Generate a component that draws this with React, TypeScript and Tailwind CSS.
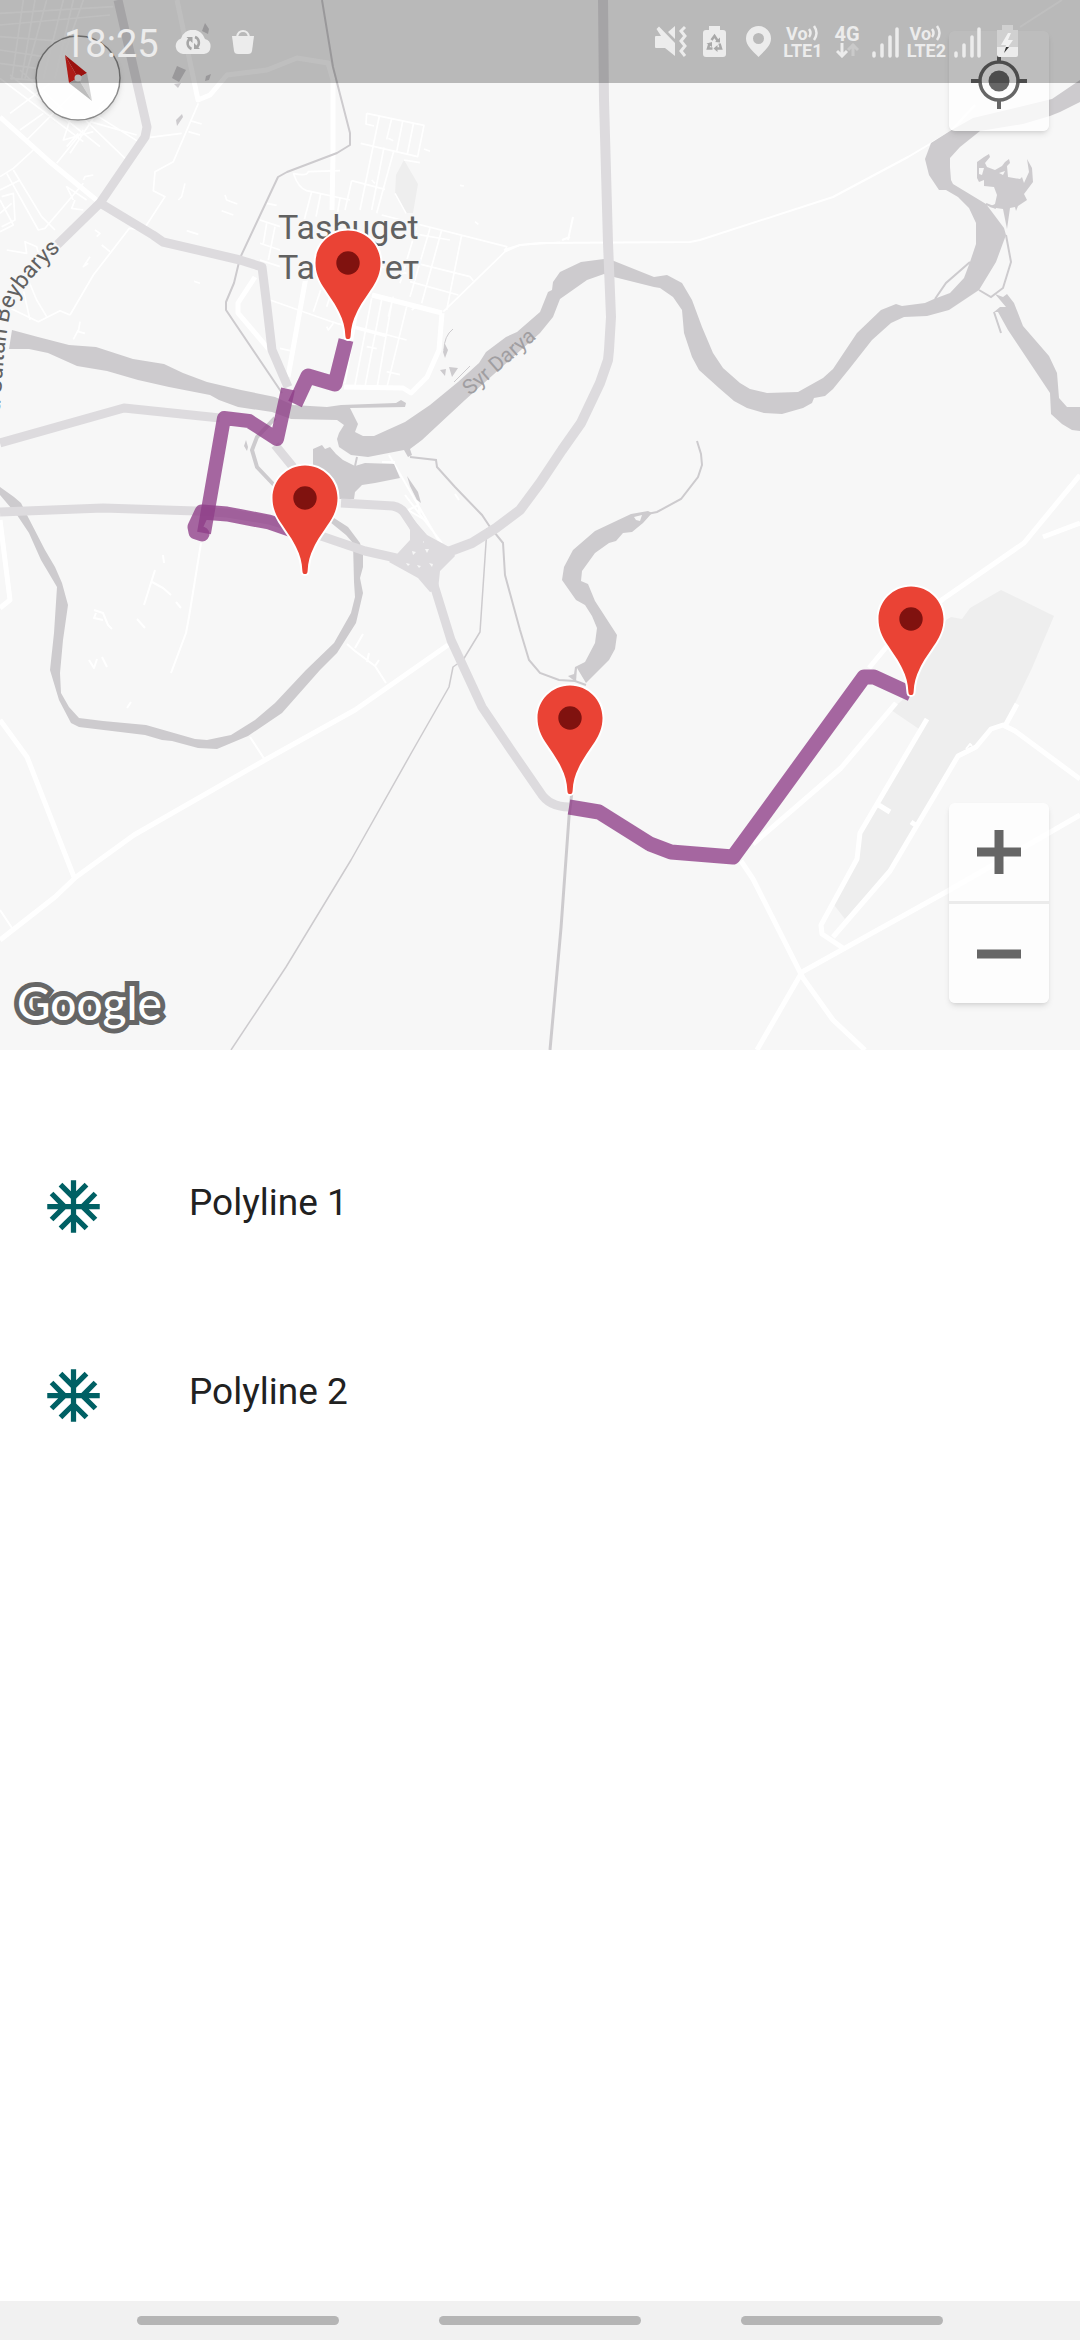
import { MdAcUnit } from "react-icons/md";

const ROUTE_COLOR = "#8e3d88";

const pins = [
  { x: 348, y: 263 },
  { x: 305, y: 498 },
  { x: 570, y: 718 },
  { x: 911, y: 619 },
];

const polylines = [
  { id: 1, name: "Polyline 1" },
  { id: 2, name: "Polyline 2" },
];

function Pin({ x, y }: { x: number; y: number }) {
  return (
    <g transform={`translate(${x} ${y})`}>
      <path
        d="M0-32.500C-18-32.500-32.500-18-32.500 0C-32.500 10-29 17-25 23.500C-18 34-12 42-8.500 50C-5 57-3 64-2.600 73C-2.500 75.500-1.500 76 0 76C1.500 76 2.500 75.500 2.600 73C3 64 5 57 8.500 50C12 42 18 34 25 23.500C29 17 32.500 10 32.500 0C32.500-18 18-32.500 0-32.500Z"
        fill="#ea4335"
        stroke="#fff"
        strokeWidth="4"
        paintOrder="stroke"
      />
      <circle r="11.700" fill="#80120f" />
    </g>
  );
}

function Water() {
  return (
    <g fill="#cdcbce">
      <path d="M12 330L38 337L69 345L96 347L133 359L164 364L183 373L207 382L241 390L275 397L293 405L327 407L341 405L396 403L401 400L406 403L405 407L350 408L358 424L355 432L363 436L374 436L405 422L430 405L458 382L479 363L486 352L506 337L517 332L540 312L548 292L552 290L553 282L560 272L581 262L604 259L614 261L654 277L667 275L682 283L692 300L702 327L713 353L723 368L740 383L750 389L767 393L798 392L823 378L833 369L857 333L881 310L896 304L902 306L925 303L934 299L950 293L964 278L970 262L976 244L976 223L969 208L958 197L946 190L939 190L929 175L925 159L931 143L950 131L973 118L1052 99L1080 80L1080 102L1060 112L1050 116L1023 124L980 131L960 147L950 158L950 167L951 180L953 184L986 204L1004 228L1006 235L1003 243L996 262L979 290L949 310L927 316L904 317L891 323L872 340L850 368L833 389L825 396L814 398L812 403L803 408L782 414L764 413L747 408L734 401L719 388L699 370L692 357L684 333L682 310L673 297L660 288L654 287L614 277L604 274L587 280L560 299L553 317L540 333L465 400L422 440L410 449L412 455L408 457L404 450L368 457L351 455L339 447L337 439L339 433L344 425L337 420L291 419L272 412L238 407L219 400L210 395L169 387L138 380L107 371L77 366L48 353L29 349L9 349Z" />
      <path d="M313 449L322 445L325 449L330 447L336 454L343 460L355 466L365 463L394 464L400 478L375 483L362 485L355 492L354 499L331 499L313 483Z" />
      <path d="M0 487L14 497L21 503L28 517L45 550L55 567L62 583L68 605L63 640L60 673L61 693L69 707L79 718L103 721L146 725L195 739L207 740L231 735L255 720L275 703L306 670L334 643L351 613L355 597L354 582L353 543L346 535L330 522L334 518L348 527L360 543L363 555L363 567L360 578L363 593L356 623L337 653L320 670L282 713L248 736L217 749L198 748L172 741L162 740L145 735L79 727L71 723L59 700L50 670L54 633L57 587L41 560L29 533L17 515L0 495Z" />
      <path
        fillRule="evenodd"
        d="M652 513L648 511L631 514L595 531L573 550L564 567L562 580L576 600L585 605L592 616L597 628L595 643L585 662L575 667L574 674L568 676L576 682L577 668L586 683L609 660L615 649L617 635L595 601L588 584L581 581L582 571L595 553L609 543L616 541L623 533L632 532L643 523ZM634 517L642 515L640 521L636 520Z"
      />
      <path
        fillRule="evenodd"
        d="M977 162L984 157L989 154L990 157L985 163L987 167L995 170L1002 166L1005 162L1009 159L1010 163L1007 166L1008 177L1020 179L1022 177L1024 183L1029 172L1027 159L1032 168L1033 182L1024 194L1027 200L1018 206L1016 211L1015 207L1010 208L1007 229L1003 209L989 207L995 204L997 195L994 187L984 186L984 180L979 182L977 178ZM979 168L984 168L982 175L979 174ZM999 173L1005 171L1003 175Z"
      />
      <path d="M995 294L1003 297L1007 294L1014 303L1023 326L1049 356L1057 373L1059 398L1067 407L1080 407L1080 431L1072 430L1062 424L1051 414L1050 393L1026 357L1008 330L998 312L994 312L1000 307L1006 307Z" />
      <path d="M407 476L418 492L421 503L417 500L410 486ZM445 344L448 350L445 358L443 352ZM440 370L446 369L445 376ZM449 367L458 368L452 377ZM246 440L248 447L247 451L244 446Z" />
      <path d="M205 23L209 29L208 34L202 31ZM177 66L186 70L179 82L172 78ZM206 76L211 74L209 80L205 81ZM182 114L183 117L177 126L176 120ZM174 84L181 83L178 88Z" />
      <g fill="none" stroke="#cdcbce" strokeWidth="2">
        <path d="M1006 235L1011 262L1003 288L991 297L979 290M970 262L946 283L935 299M986 204L996 208M994 312L1001 333" />
        <path d="M647 514L657 512L681 499L698 477L702 465L701 454L697 441" />
        <path d="M410 457L436 460L437 467L455 487L482 515L490 527L503 543L505 575L520 630L529 660L540 673L559 680L575 681L586 685" />
        <path d="M357 457L355 466" />
        <path d="M275 418L257 437L252 450L257 467L274 485" strokeWidth="4" />
        <path d="M444 350Q444 336 453 329M454 382L470 366" strokeWidth="1" />
      </g>
    </g>
  );
}

function MinorStreets() {
  return (
    <g fill="none" stroke="#fff" strokeLinejoin="round">
      {/* Tasbuget street grid */}
      <g transform="translate(260 110) scale(.33333)" strokeWidth="5">
        <path d="M320 10L492 46L473 140L302 100M320 10L318 42L342 48M358 18L300 300M395 26L380 88M428 34L410 125M460 42L442 132M402 120L350 310M372 112L335 300M432 150L480 158M275 212L375 238M275 212L255 300" />
        <path d="M100 190Q115 235 140 242L270 270M100 190Q140 200 145 185L240 182M155 245L130 340M182 252L168 320M240 265L232 310M20 280L50 286M0 330L60 350M0 400L60 420M20 340L10 400M45 350L25 450M0 450L60 470" />
        <path d="M365 315L740 410L735 425L550 605M510 355L450 560M545 360L485 580M605 375L560 600M470 350L420 520M455 370L570 390M450 455L630 500L640 512M450 515L595 555M365 470L440 490M735 425L780 405L900 397" />
        <path d="M30 570L215 635M215 635L230 640L380 680M182 540L160 605M215 545L200 590M250 640L440 690M300 560L255 820M335 565L285 825M365 570L315 830M395 580L350 840M440 590L380 835M320 710L350 716M380 785L420 794M400 560L385 620M475 585L455 600M60 715L90 722M200 650L205 660L220 640" />
        <path d="M385 85L400 92M335 210L345 220M492 117L510 124M600 226L612 228M645 335L655 343M405 250L438 310" />
      </g>
      {/* Western suburb street grid */}
      <g transform="scale(.33333)" strokeWidth="5">
        <path d="M70 0L35 240M105 0L65 235M140 0L75 235M190 0L130 235M220 0L165 235M250 0L190 170M0 40L340 20M0 75L330 45M0 110L200 125M0 150L130 170M0 190L110 205M30 235L240 250M0 235L250 425M30 225L300 440M60 210L190 330" />
        <path d="M270 365L410 405M240 345L375 475M280 340L415 425M210 360L190 420L280 395M170 490L250 390M200 440L235 400M310 310L210 460M130 340L60 390M240 260L80 420M150 250L30 340M100 450L40 505L0 530" />
        <path d="M20 520L115 690L135 685L250 550M40 510L125 650M0 570L60 540M0 600L40 675L0 695M0 640L35 610M5 590L40 580L45 660L5 680M125 650L165 690M220 600L200 560L260 600M225 600L215 625L250 630" />
        <path d="M20 750L80 760L75 725L110 740L120 780M85 840L110 900L140 950M70 870L90 960M265 790L250 800L270 770M305 735L330 755M285 690L300 700L290 710M250 540L255 530L280 525M535 600L545 590L555 550" />
        <path d="M450 412L545 400M570 362L605 372M210 945L180 932L115 965L0 910M210 945L280 825L388 685L430 690L495 590L460 572L465 515L520 485L595 310" />
        <path d="M665 632L700 645M675 585L680 600L712 612M560 692L595 703M582 844L600 850M565 395L600 405M240 965L235 995L255 1000M235 990L220 1018" />
      </g>
      {/* Rural tracks */}
      <g strokeWidth="2">
        <path d="M201 543L189 617L186 633L171 673M155 570L144 605M152 582L163 588L171 595M176 602L181 608M137 619L145 628M163 555L164 563M94 610L103 613L108 625L112 629M96 613L94 618L103 620M89 660L94 668L97 659M102 657L107 667M131 702L127 708M250 737L265 760M0 910L12 928M347 644L355 651L375 666L386 683M355 648L363 634M367 662L369 653M375 666L379 660" />
        <path d="M504 250L520 245L540 243L690 242L700 240L833 197L908 157L950 132L975 105M1020 27L1062 0M568 240L573 217M562 240L570 237" />
        <path d="M389 455L440 543M405 495L442 543M382 462L395 462M419 505L408 510L425 520M417 500L420 514M455 494L459 500" />
        <path d="M972 746L970 744L966 749" />
      </g>
    </g>
  );
}

function Roads() {
  return (
    <g fill="none" strokeLinejoin="round">
      <g stroke="#fff" strokeWidth="5">
        <path d="M0 117L50 162L100 203M333 80L333 153L332 210M177 0L198 100L210 95L227 75L267 70L297 58L328 63L333 80" />
        <path d="M442 313L439 350L427 377L411 393L403 388L344 387M442 313L372 295M306 277L300 310L288 377M255 277L238 303L238 313L272 353" />
        <path d="M1080 475L1024 543L943 599L888 645L869 668M1080 523L1043 537M896 703L841 768L753 844M741 861L753 879L803 978L833 1020L865 1050M1080 815L946 892L802 972L757 1050M1080 779L1015 731L1003 725L991 729L976 747L958 756L890 871L833 937M927 719L877 804L860 833L857 859L821 925L822 934L843 948M1017 704L1005 726M877 804L890 812M911 822L917 826" />
        <path d="M0 720L27 757L74 877M0 940L55 897L76 877L134 835L265 760L355 710L448 645M0 608L10 600L0 520" />
      </g>
      <g stroke="#cdcbce" strokeWidth="2">
        <path d="M322 0L333 67L350 133L350 145L337 153L287 172L278 177L240 258L234 283L226 302L226 310L282 393" />
        <path d="M487 528L480 632L463 660L453 667L449 687L413 750L351 860L286 967L231 1050" strokeWidth="1.500" />
        <path d="M573 783L569 817L561 928L550 1050" strokeWidth="3" />
      </g>
      <g stroke="#dddbde" strokeWidth="9">
        <path d="M118 0L147 127L145 137L100 203L57 245M100 203L153 235L163 242L240 260L262 267L267 307L272 350L288 387M0 443L124 408L220 418" />
        <path d="M603 0L604 100L608 243L611 317L609 350L608 360L600 383L581 423L562 450L540 483L520 510L496 528L472 543L448 552L436 560" strokeWidth="10" />
        <path d="M434 585L451 640L482 707L511 750L540 792Q549 807 569 807M0 512L103 508L196 511L227 513L269 520L324 537L365 551L396 558L410 560M275 445L293 467M341 503L393 506Q402 508 405 514L417 532L430 545L448 552" />
      </g>
      <path
        d="M405 512L414 520L427 535L451 548L455 556L440 571L438 590L430 592L418 578L389 562L398 553L410 540L410 530Z"
        fill="#dddbde"
      />
      <path
        d="M412 551L416 552L413 555ZM425 549L429 549L427 553ZM406 563L410 564L408 566ZM417 565L421 566L419 568ZM429 563L433 564L432 567ZM423 541L424 542L423 543Z"
        fill="#f7f7f7"
      />
    </g>
  );
}

function MapCanvas() {
  return (
    <svg
      viewBox="0 0 1080 1050"
      className="block w-full"
      role="img"
      aria-label="Map of Tasbuget"
      fontFamily="Roboto, sans-serif"
    >
      <rect width="1080" height="1050" fill="#f7f7f7" />
      <path
        d="M946 620L951 617L962 619L970 608L1001 590L1054 616L1032 668L1005 724L991 729L976 747L958 756L915 827L888 871L845 919L834 905L857 861L860 833L919 729L891 710L908 695ZM404 160L418 184L413 213L405 213L395 195L396 175Z"
        fill="#eee"
      />
      <MinorStreets />
      <Water />
      <Roads />
      <g fill="none" stroke={ROUTE_COLOR} strokeOpacity=".78" strokeWidth="15" strokeLinejoin="round">
        <path d="M346 340L335 384L308 376L295 404" />
        <path d="M288 389L277 439L249 421L224 418L204 533" strokeWidth="14" />
        <path d="M202 534L196 532L195 527L202 512L227 514L269 522L295 531" strokeLinecap="round" />
        <path d="M569 807L599 812L650 844L671 852L733 857L864 677L874 677L911 694" />
      </g>
      <g fill="#616161" stroke="#f7f7f7" strokeWidth="4" paintOrder="stroke">
        <text x="278" y="239" fontSize="34">Tasbuget</text>
        <text x="278" y="279" fontSize="34">Тасбөгет</text>
        <path id="beybarys" d="M-6 480L2 380Q5 335 11 310Q25 281 61 249" fill="none" stroke="none" />
        <text fontSize="23">
          <textPath href="#beybarys" startOffset="100%" textAnchor="end">ulitsa Sultan Beybarys</textPath>
        </text>
      </g>
      <text fontSize="21" fill="#a09ea1" transform="translate(470 396) rotate(-41)">Syr Darya</text>
      {pins.map((p) => (
        <Pin key={`${p.x}-${p.y}`} x={p.x} y={p.y} />
      ))}
    </svg>
  );
}

function Signal() {
  return (
    <svg width="27" height="33" viewBox="0 0 27 33" stroke="currentColor" strokeWidth="3.500" strokeLinecap="round">
      <path d="M2 28V31M10 20V31M18 12V31M25 4V31" />
    </svg>
  );
}

function VoLte({ slot }: { slot: number }) {
  return (
    <span className="flex flex-col items-center text-[18px] leading-[17px] font-bold">
      <span className="flex items-center">
        Vo
        <svg width="12" height="16" viewBox="0 0 12 16" fill="none" stroke="currentColor" strokeWidth="2.500">
          <path d="M1 4Q4 8 1 12M6 1Q11 8 6 15" />
        </svg>
      </span>
      <span>LTE{slot}</span>
    </span>
  );
}

function StatusBar() {
  return (
    <header className="absolute inset-x-0 top-0 z-10 flex h-[83px] items-center bg-black/25 pr-[62px] pl-16 text-[#ececec]">
      <time className="pt-1 text-[38px] leading-10">18:25</time>
      <svg className="ml-4" width="36" height="24" viewBox="0 0 36 24" fill="currentColor">
        <path d="M8 24A8 8 0 0 1 6 8.500A12.500 12.500 0 0 1 30 9A7.700 7.700 0 0 1 29 24Z" />
        <g fill="none" stroke="#a6a6a6" strokeWidth="2.500">
          <path d="M16.500 19A6 6 0 0 1 14.500 9M20 7A6 6 0 0 1 22 17" />
        </g>
        <path d="M11.500 7H17.500V13ZM25 19H19V13Z" fill="#a6a6a6" />
      </svg>
      <svg className="ml-5" width="24" height="26" viewBox="0 0 24 26" fill="currentColor">
        <path d="M1 7H23L21 22Q20.500 25 17 25H7Q3.500 25 3 22Z" />
        <path d="M6 8Q7 2 12 2Q17 2 18 8" fill="none" stroke="currentColor" strokeWidth="2" />
      </svg>
      <div className="ml-auto flex items-center">
        <svg width="32" height="33" viewBox="0 0 32 33" fill="currentColor">
          <path d="M0 12Q0 11 1 11H6L1.500 4L4 1.500L20 18V31L10 23H1Q0 23 0 22ZM20 1V14L13 7Z" />
          <path
            d="M30 2L26 6L30 11L26 16L30 21L26 26L30 31"
            fill="none"
            stroke="currentColor"
            strokeWidth="3"
          />
        </svg>
        <svg className="ml-4" width="23" height="33" viewBox="0 0 23 33" fill="currentColor">
          <path d="M6 1H17V5H20Q23 5 23 8V29Q23 32 20 32H3Q0 32 0 29V8Q0 5 3 5H6Z" />
          <g fill="none" stroke="#a9a9a9" strokeWidth="2.500">
            <path d="M8.500 15L11.500 11L14.500 15.500M16.500 18.500L18 23.500H13.500M9.500 23.500H5L6.500 18.500" />
          </g>
          <path d="M12 17L17 17.500L17 12.500ZM14.500 20V27L10.500 23.500ZM3.500 18.500L9 17L9 22Z" fill="#a9a9a9" />
        </svg>
        <svg className="ml-5" width="25" height="33" viewBox="0 0 25 33" fill="currentColor">
          <path
            fillRule="evenodd"
            d="M12.500 1A12.500 12.500 0 0 0 0 13.500C0 21 7 26 12.500 32C18 26 25 21 25 13.500A12.500 12.500 0 0 0 12.500 1ZM12.500 8A5.500 5.500 0 1 1 12.500 19A5.500 5.500 0 1 1 12.500 8Z"
          />
        </svg>
        <span className="ml-3">
          <VoLte slot={1} />
        </span>
        <span className="ml-3 flex flex-col items-center text-[20px] leading-[18px] font-bold">
          4G
          <svg width="23" height="15" viewBox="0 0 23 15" fill="none" stroke="currentColor" strokeWidth="3">
            <path d="M6 0V12M1 8L6 13L11 8" />
            <path d="M17 13V1M12 7L17 2L22 7" strokeOpacity=".35" />
          </svg>
        </span>
        <span className="ml-3">
          <Signal />
        </span>
        <span className="ml-2">
          <VoLte slot={2} />
        </span>
        <span className="ml-2">
          <Signal />
        </span>
        <svg className="ml-4" width="21" height="33" viewBox="0 0 21 33">
          <path d="M5 0H16V5H21V22H0V5H5Z" fill="#d0d0d0" />
          <path d="M0 22H21V30Q21 32 19 32H2Q0 32 0 30Z" fill="currentColor" />
          <path d="M11 8L4 20H9L7 28L16 15H11L14 8Z" fill="#f2f2f2" />
          <path d="M9 22L7 28L12 22Z" fill="#333" />
        </svg>
      </div>
    </header>
  );
}

function Compass() {
  return (
    <button aria-label="Reset bearing" className="absolute top-[35px] left-[35px] rounded-full shadow-md">
      <svg width="86" height="86" viewBox="-43 -43 86 86" className="block">
        <circle r="42" fill="#fff" fillOpacity=".85" stroke="#8c8c8c" strokeWidth="1.500" />
        <path d="M-13-23L9-5L0 0Z" fill="#cf1815" />
        <path d="M-13-23L-9 5L0 0Z" fill="#e8241f" />
        <path d="M14 23L9-5L0 0Z" fill="#d6d6d6" />
        <path d="M14 23L-9 5L0 0Z" fill="#bdbdbd" />
        <circle r="3.500" fill="#f5f5f5" />
      </svg>
    </button>
  );
}

export default function App() {
  return (
    <div className="flex min-h-screen flex-col bg-white font-[Roboto,sans-serif] text-[#212121]">
      <section className="relative">
        <MapCanvas />
        <Compass />
        <button
          aria-label="My location"
          className="absolute top-[31px] right-[31px] flex size-[100px] items-center justify-center rounded-md bg-white/80 text-[#666] shadow-md"
        >
          <svg width="58" height="58" viewBox="-29 -29 58 58" fill="none" stroke="currentColor">
            <circle r="19" strokeWidth="3.500" />
            <circle r="10.500" fill="currentColor" stroke="none" />
            <path d="M0-28V-19M0 19V28M-28 0H-19M19 0H28" strokeWidth="4" />
          </svg>
        </button>
        <div className="absolute right-[31px] bottom-[47px] flex w-[100px] flex-col divide-y-[3px] divide-[#ebebeb] rounded-md bg-white/80 text-[#666] shadow-md">
          <button aria-label="Zoom in" className="flex h-[101px] items-center justify-center">
            <svg width="44" height="44" viewBox="0 0 44 44" stroke="currentColor" strokeWidth="9">
              <path d="M22 0V44M0 22H44" />
            </svg>
          </button>
          <button aria-label="Zoom out" className="flex h-[99px] items-center justify-center">
            <svg width="44" height="44" viewBox="0 0 44 44" stroke="currentColor" strokeWidth="9">
              <path d="M0 22H44" />
            </svg>
          </button>
        </div>
        <a href="#google" className="absolute bottom-0 left-3">
          <svg width="180" height="90" viewBox="0 0 180 90">
            <text
              x="5"
              y="60"
              fontFamily="Lato, sans-serif"
              fontWeight="500"
              fontSize="46"
              fill="#fff"
              stroke="#666"
              strokeWidth="10"
              paintOrder="stroke"
            >
              Google
            </text>
          </svg>
        </a>
        <StatusBar />
      </section>

      <main className="grow pt-[62px]">
        <ul>
          {polylines.map((line) => (
            <li key={line.id}>
              <button className="flex h-[189px] w-full items-center gap-[84px] px-[42px] text-left">
                <MdAcUnit size={63} color="#006064" aria-hidden="true" />
                <span className="pb-2 text-[37px] leading-[48px]">{line.name}</span>
              </button>
            </li>
          ))}
        </ul>
      </main>

      <nav className="flex h-[39px] items-center justify-center gap-[100px] bg-[#f1f1f1]" aria-label="System navigation">
        <button aria-label="Recent apps" className="h-[9px] w-[202px] rounded-full bg-[#b5b5b5]" />
        <button aria-label="Home" className="h-[9px] w-[202px] rounded-full bg-[#b5b5b5]" />
        <button aria-label="Back" className="h-[9px] w-[202px] rounded-full bg-[#b5b5b5]" />
      </nav>
    </div>
  );
}
